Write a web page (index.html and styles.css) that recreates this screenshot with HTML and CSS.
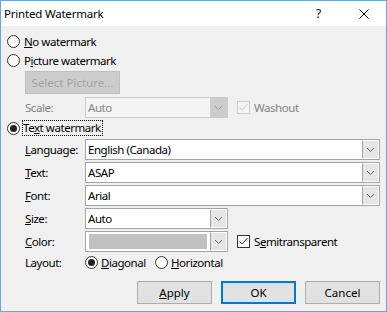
FILE: index.html
```html
<!DOCTYPE html>
<html lang="en">
<head>
  <meta charset="UTF-8">
  <title>Printed Watermark</title>
  <link rel="stylesheet" href="styles.css">
</head>
<body>
  <div class="window">
    <div class="titlebar">
      <span class="title">Printed Watermark</span>
      <span class="caption-btn">?</span>
      <span class="caption-btn">
        <svg width="10" height="10" viewBox="0 0 10 10"><path d="M0.5 0.5 L9.5 9.5 M9.5 0.5 L0.5 9.5" stroke="#000" stroke-width="1"/></svg>
      </span>
    </div>

    <div class="content">
      <div class="option top"><span class="radio"></span><span><u>N</u>o watermark</span></div>
      <div class="option"><span class="radio"></span><span>P<u>i</u>cture watermark</span></div>

      <div class="indent">
        <button class="btn disabled select-pic">Select Picture...</button>
        <div class="field scale disabled">
          <span class="label">Scale:</span>
          <div class="combo small">
            <span class="value">Auto</span>
            <span class="drop"><svg width="7" height="4" viewBox="0 0 7 4"><path d="M0 0 L3.5 3.5 L7 0" fill="none" stroke="#a0a0a0"/></svg></span>
          </div>
          <span class="check"><span class="box"><svg width="11" height="11" viewBox="0 0 11 11"><path d="M1.5 5.5 L4 8 L9.5 2" fill="none" stroke="#c4c4c4"/></svg></span>Washout</span>
        </div>
      </div>

      <div class="option text-opt"><span class="radio on"></span><span class="focus">Te<u>x</u>t watermark</span></div>

      <div class="indent">
        <div class="field first">
          <span class="label"><u>L</u>anguage:</span>
          <div class="combo">
            <span class="value">English (Canada)</span>
            <span class="drop"><svg width="7" height="4" viewBox="0 0 7 4"><path d="M0 0 L3.5 3.5 L7 0" fill="none" stroke="#606060"/></svg></span>
          </div>
        </div>
        <div class="field">
          <span class="label"><u>T</u>ext:</span>
          <div class="combo">
            <span class="value">ASAP</span>
            <span class="drop"><svg width="7" height="4" viewBox="0 0 7 4"><path d="M0 0 L3.5 3.5 L7 0" fill="none" stroke="#606060"/></svg></span>
          </div>
        </div>
        <div class="field">
          <span class="label"><u>F</u>ont:</span>
          <div class="combo">
            <span class="value">Arial</span>
            <span class="drop"><svg width="7" height="4" viewBox="0 0 7 4"><path d="M0 0 L3.5 3.5 L7 0" fill="none" stroke="#606060"/></svg></span>
          </div>
        </div>
        <div class="field">
          <span class="label"><u>S</u>ize:</span>
          <div class="combo small">
            <span class="value">Auto</span>
            <span class="drop"><svg width="7" height="4" viewBox="0 0 7 4"><path d="M0 0 L3.5 3.5 L7 0" fill="none" stroke="#606060"/></svg></span>
          </div>
        </div>
        <div class="field">
          <span class="label"><u>C</u>olor:</span>
          <div class="combo small">
            <span class="swatch"></span>
            <span class="drop"><svg width="7" height="4" viewBox="0 0 7 4"><path d="M0 0 L3.5 3.5 L7 0" fill="none" stroke="#606060"/></svg></span>
          </div>
          <span class="check"><span class="box"><svg width="11" height="11" viewBox="0 0 11 11"><path d="M1.5 5.5 L4 8 L9.5 2" fill="none" stroke="#333"/></svg></span>S<u>e</u>mitransparent</span>
        </div>
        <div class="layout-row">
          <span class="label">Layout:</span>
          <span class="layout-opt diag"><span class="radio on"></span><span><u>D</u>iagonal</span></span>
          <span class="layout-opt"><span class="radio"></span><span><u>H</u>orizontal</span></span>
        </div>
      </div>

      <div class="actions">
        <button class="btn"><u>A</u>pply</button>
        <button class="btn default">OK</button>
        <button class="btn">Cancel</button>
      </div>
    </div>
  </div>
</body>
</html>
```

FILE: styles.css
```css
body {
  margin: 0;
  font-family: "Noto Sans", sans-serif;
  font-size: 11.5px;
  letter-spacing: -0.45px;
  color: #000;
}
.window {
  width: 387px;
  height: 312px;
  box-sizing: border-box;
  border: 1px solid #6fa3dc;
  background: #f0f0f0;
}
.titlebar {
  height: 25px;
  background: #fff;
  display: flex;
  align-items: center;
}
.title {
  flex: 1;
  padding-left: 3px;
  letter-spacing: -0.2px;
}
.caption-btn {
  width: 45px;
  height: 25px;
  display: flex;
  align-items: center;
  justify-content: center;
  font-size: 12px;
}
.content {
  padding: 6px 6px 0 6px;
}
.option {
  height: 19px;
  display: flex;
  align-items: center;
}
.radio {
  width: 13px;
  height: 13px;
  box-sizing: border-box;
  border: 1px solid #333;
  border-radius: 50%;
  background: #fff;
  margin-right: 4px;
  position: relative;
  flex: 0 0 auto;
}
.radio.on::after {
  content: "";
  position: absolute;
  left: 2px;
  top: 2px;
  width: 7px;
  height: 7px;
  border-radius: 50%;
  background: #222;
}
.text-opt {
  height: 20px;
}
.focus {
  outline: 1px dotted #000;
  padding: 0 1px 0 0;
  margin-left: -1px;
  line-height: 14px;
}
.indent {
  margin-left: 18px;
}
.btn {
  font: inherit;
  color: #000;
  width: 75px;
  height: 23px;
  box-sizing: border-box;
  background: #e1e1e1;
  border: 1px solid #adadad;
  padding: 0;
  margin: 0;
}
.btn.default {
  border: 2px solid #0078d7;
}
.btn.disabled {
  background: #cccccc;
  border-color: #bfbfbf;
  color: #a3a3a3;
}
.select-pic {
  width: 95px;
  margin-top: 1px;
  display: block;
}
.field {
  display: flex;
  align-items: center;
  margin-top: 2px;
}
.field.first {
  margin-top: 1px;
}
.field.scale {
  margin-top: 3px;
}
.label {
  width: 60px;
  flex: 0 0 auto;
}
.combo {
  flex: 1;
  height: 21px;
  box-sizing: border-box;
  border: 1px solid #a5a5a5;
  background: #fff;
  display: flex;
  align-items: stretch;
}
.combo.small {
  flex: 0 0 143px;
}
.value {
  flex: 1;
  padding-left: 2px;
  line-height: 19px;
}
.drop {
  width: 17px;
  border: 1px solid #fff;
  border-left: 1px solid #a5a5a5;
  background: #e5e5e5;
  display: flex;
  align-items: center;
  justify-content: center;
  padding-top: 1px;
  box-sizing: border-box;
}
.swatch {
  flex: 1;
  margin: 2px 3px 2px 3px;
  background: #c0c0c0;
}
.disabled .label,
.disabled .value,
.disabled .check {
  color: #838383;
}
.disabled .combo {
  background: #f4f4f4;
  border-color: #cccccc;
}
.disabled .drop {
  background: #cccccc;
  border-color: #cccccc;
}
.disabled .box {
  border-color: #cccccc;
}
.check {
  display: flex;
  align-items: center;
  margin-left: 9px;
}
.box {
  width: 13px;
  height: 13px;
  box-sizing: border-box;
  border: 1px solid #333;
  background: #fff;
  margin-right: 4px;
  display: flex;
}
.disabled .box {
  background: #f4f4f4;
}
.layout-row {
  display: flex;
  align-items: center;
  height: 19px;
  margin-top: 1px;
}
.layout-opt {
  display: flex;
  align-items: center;
}
.layout-opt .radio {
  margin-right: 3px;
}
.layout-opt.diag {
  width: 70px;
}
.actions {
  display: flex;
  justify-content: flex-end;
  gap: 9px;
  margin-top: 9px;
}
```
